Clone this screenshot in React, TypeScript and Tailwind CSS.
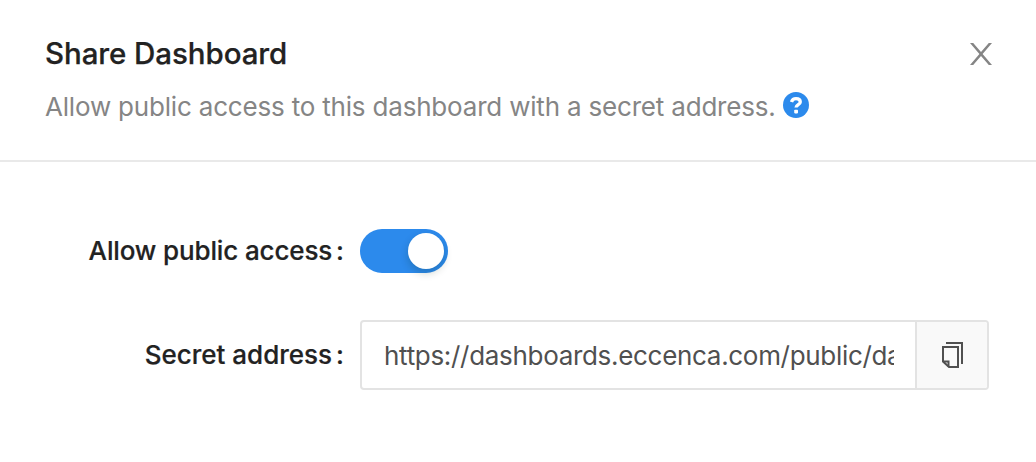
import { useState } from "react";

function CloseIcon() {
  return (
    <svg viewBox="0 0 22 22" className="h-[22px] w-[22px]" fill="#858585">
      <path d="M0 0H3.200L11 9 18.800 0H22L12.600 11 22 22H18.800L11 13 3.200 22H0L9.400 11Z" />
    </svg>
  );
}

function HelpIcon() {
  return (
    <svg viewBox="0 0 26 26" className="h-[26px] w-[26px] shrink-0">
      <circle cx="13" cy="13" r="13" fill="#2c8aec" />
      <path d="M8.500 10C9.200 7.700 10.800 6.700 13 6.700c2.600 0 4.300 1.200 4.300 3.200 0 2.800-4.300 2.600-4.300 5.700" fill="none" stroke="#fff" strokeWidth="3.300" />
      <rect x="11.200" y="17.700" width="3.800" height="3.700" rx="0.800" fill="#fff" />
    </svg>
  );
}

function CopyIcon() {
  return (
    <svg viewBox="0 0 22 26" className="ml-0.5 h-[26px] w-[22px]" fill="none" stroke="#505050" strokeWidth="2">
      <path d="M4 1H20V22" />
      <path d="M1 5H16V25H7L1 19.500Z" />
      <path d="M1.500 19.500H6.500V25" />
    </svg>
  );
}

export default function App() {
  const [enabled, setEnabled] = useState(true);
  return (
    <div className="h-[462px] w-[1036px] overflow-hidden bg-white font-['Inter',sans-serif] text-[#222222]">
      <header className="flex h-[162px] items-start justify-between border-b-2 border-[#e9e9e9] pt-[35px] pr-11 pl-[45px]">
        <div>
          <h1 className="text-[29.500px] leading-9 font-medium tracking-[-0.080px] whitespace-nowrap [-webkit-text-stroke:0.250px_#222222]">
            Share Dashboard
          </h1>
          <div className="mt-[18px] flex h-9 items-center gap-2">
            <p className="w-[730px] text-[26px] leading-9 tracking-[-0.190px] whitespace-nowrap text-[#858585]">
              Allow public access to this dashboard with a secret address.
            </p>
            <div className="-mt-1"><HelpIcon /></div>
          </div>
        </div>
        <button aria-label="Close" className="mt-2"><CloseIcon /></button>
      </header>
      <main className="flex flex-col gap-[47px] pt-[67px]">
        <div className="flex h-11 items-center">
          <div className="flex w-[360px] justify-end pr-4 text-[26px] leading-9 font-medium whitespace-nowrap [-webkit-text-stroke:0.200px_#222222]">
            <span className="tracking-[-0.140px]">Allow public access</span>
            <span className="ml-1">:</span>
          </div>
          <button
            role="switch"
            aria-checked={enabled}
            aria-label="Allow public access"
            onClick={() => setEnabled(!enabled)}
            className={`flex h-11 w-[88px] items-center rounded-full px-1 ${enabled ? "justify-end bg-[#2c8aec]" : "justify-start bg-gray-400"}`}
          >
            <span className="h-9 w-9 rounded-full bg-white shadow-[0_4px_8px_rgba(0,35,11,0.2)]" />
          </button>
        </div>
        <div className="flex h-[70px] items-center">
          <div className="flex w-[360px] justify-end pr-4 text-[26px] leading-9 font-medium whitespace-nowrap [-webkit-text-stroke:0.200px_#222222]">
            <span>Secret address</span>
            <span className="ml-1">:</span>
          </div>
          <div className="flex h-[70px] w-[629px] overflow-hidden rounded-[4px] border-2 border-[#e3e3e3]">
            <div className="w-[553px] pr-[21px] pl-[22px]">
              <div className="h-full overflow-hidden text-[26px] leading-[68px] tracking-[-0.310px] whitespace-nowrap text-[#505050]">
                https://dashboards.eccenca.com/public/dashboard
              </div>
            </div>
            <button aria-label="Copy" className="flex w-[72px] items-center justify-center border-l-2 border-[#e3e3e3] bg-[#f9f9f9]">
              <CopyIcon />
            </button>
          </div>
        </div>
      </main>
    </div>
  );
}
